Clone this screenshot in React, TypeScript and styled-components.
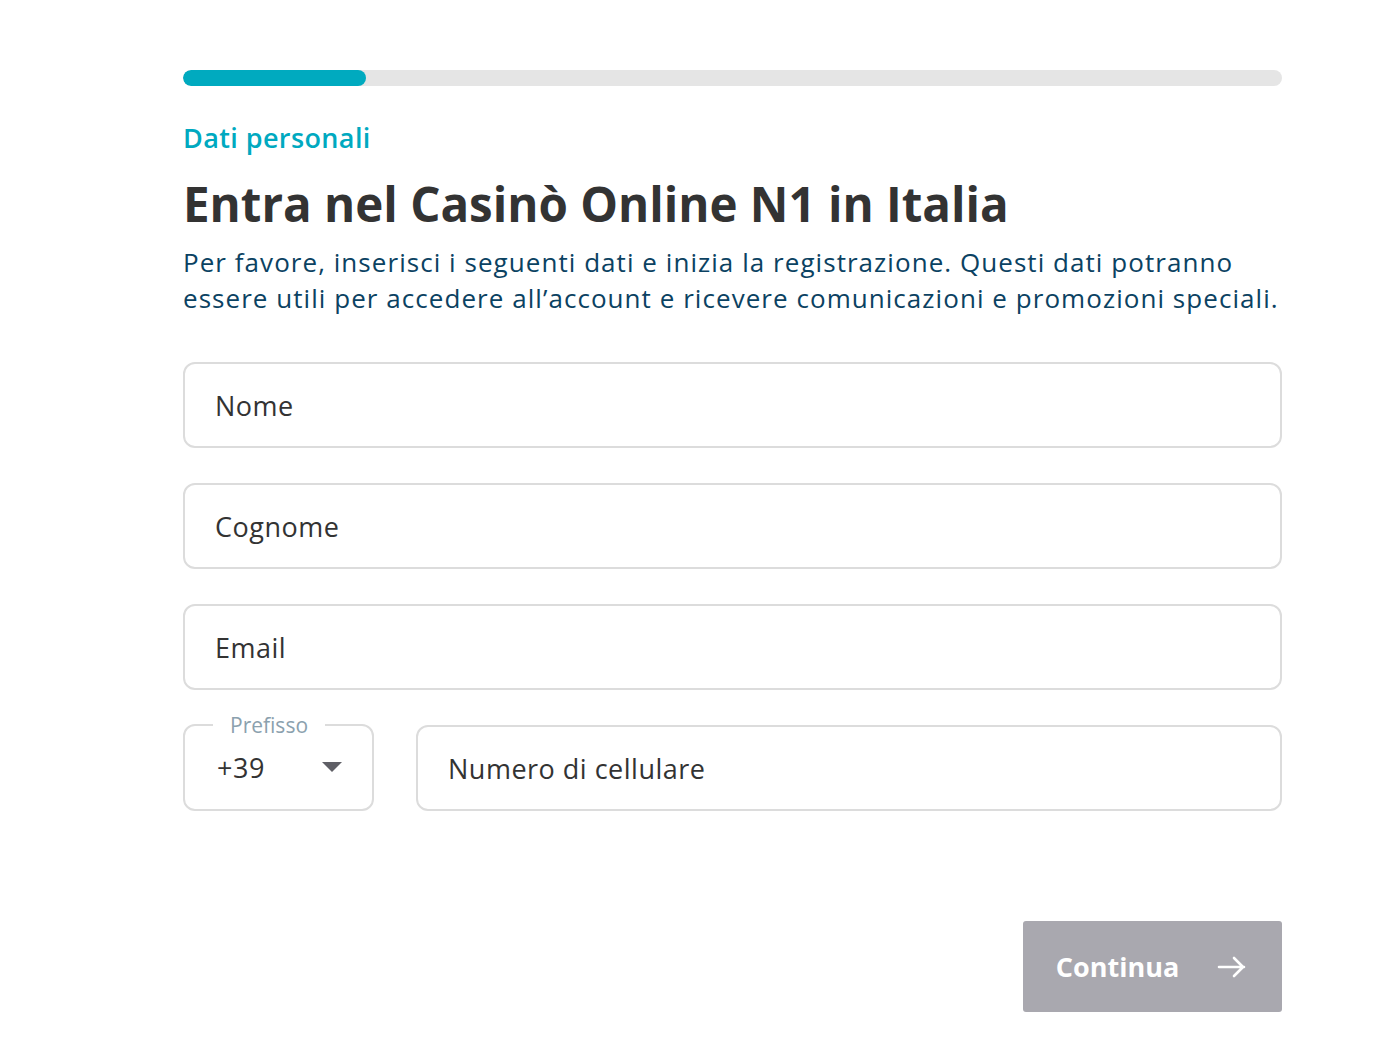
import React from "react";
import styled, { createGlobalStyle } from "styled-components";

const Global = createGlobalStyle`
  html, body {
    margin: 0;
    padding: 0;
    background: #ffffff;
  }
  body {
    font-family: "Open Sans", "Noto Sans", sans-serif;
  }
  * {
    box-sizing: border-box;
  }
`;

const Page = styled.div`
  width: 1378px;
  min-height: 1062px;
  padding: 70px 0 0 183px;
`;

const Form = styled.form`
  width: 1099px;
  display: flex;
  flex-direction: column;
`;

const Track = styled.div`
  height: 16px;
  border-radius: 8px;
  background: #e5e5e5;
  overflow: hidden;
`;

const Fill = styled.div`
  height: 100%;
  border-radius: 8px;
  background: #00aabf;
`;

const Step = styled.div`
  margin-top: 35px;
  font-size: 27px;
  font-weight: 600;
  line-height: 34px;
  letter-spacing: 0.4px;
  color: #00a9c0;
`;

const Title = styled.h1`
  margin: 19px 0 0;
  font-size: 47.5px;
  font-weight: 700;
  line-height: 60px;
  color: #333333;
`;

const Lead = styled.p`
  margin: 10px 0 0;
  font-size: 26px;
  line-height: 36px;
  letter-spacing: 1.05px;
  color: #0b4262;
`;

const Fields = styled.div`
  margin-top: 46px;
  display: flex;
  flex-direction: column;
  gap: 35px;
`;

const Row = styled.div`
  display: flex;
  gap: 42px;
`;

const Input = styled.input`
  width: 100%;
  height: 86px;
  padding: 0 30px;
  border: 2px solid #dcdcdc;
  border-radius: 12px;
  font-family: "Open Sans", "Noto Sans", sans-serif;
  font-size: 27px;
  letter-spacing: 0.5px;
  color: #333333;
  outline: none;
  &::placeholder {
    color: #333333;
  }
`;

const PrefixBox = styled.fieldset`
  flex: 0 0 191px;
  height: 96px;
  margin: -10px 0 0;
  padding: 0 30px 0 32px;
  border: 2px solid #dcdcdc;
  border-radius: 12px;
  display: flex;
  align-items: center;
  justify-content: space-between;
`;

const Legend = styled.legend`
  margin-left: -4px;
  padding: 0 17px;
  font-size: 21px;
  line-height: 20px;
  color: #8ba1ae;
`;

const PrefixValue = styled.span`
  margin-top: -10px;
  font-size: 27px;
  letter-spacing: 0.5px;
  color: #333333;
`;

const Caret = styled.span`
  margin-top: -10px;
  width: 0;
  height: 0;
  border-left: 10px solid transparent;
  border-right: 10px solid transparent;
  border-top: 10px solid #5f5f66;
`;

const Actions = styled.div`
  margin-top: 110px;
  display: flex;
  justify-content: flex-end;
`;

const Button = styled.button`
  width: 259px;
  height: 91px;
  border: none;
  border-radius: 3px;
  background: #a9a8af;
  color: #ffffff;
  font-family: "Open Sans", "Noto Sans", sans-serif;
  font-size: 27px;
  font-weight: 700;
  display: flex;
  align-items: center;
  justify-content: center;
  gap: 38px;
  padding-left: 4px;
`;

export default function App() {
  const progress = 1 / 6;
  return (
    <Page>
      <Global />
      <Form onSubmit={(e) => e.preventDefault()}>
        <Track>
          <Fill style={{ width: `${progress * 100}%` }} />
        </Track>
        <Step>Dati personali</Step>
        <Title>Entra nel Casinò Online N1 in Italia</Title>
        <Lead>
          Per favore, inserisci i seguenti dati e inizia la registrazione. Questi dati potranno
          essere utili per accedere all’account e ricevere comunicazioni e promozioni speciali.
        </Lead>
        <Fields>
          <Input placeholder="Nome" />
          <Input placeholder="Cognome" />
          <Input placeholder="Email" type="email" />
          <Row>
            <PrefixBox>
              <Legend>Prefisso</Legend>
              <PrefixValue>+39</PrefixValue>
              <Caret />
            </PrefixBox>
            <Input placeholder="Numero di cellulare" />
          </Row>
        </Fields>
        <Actions>
          <Button type="submit">
            Continua
            <svg width="30" height="24" viewBox="0 0 30 24" fill="none">
              <path d="M2 12h25M17 3l9 9-9 9" stroke="#fff" strokeWidth="2.6" strokeLinecap="round" strokeLinejoin="round" />
            </svg>
          </Button>
        </Actions>
      </Form>
    </Page>
  );
}
